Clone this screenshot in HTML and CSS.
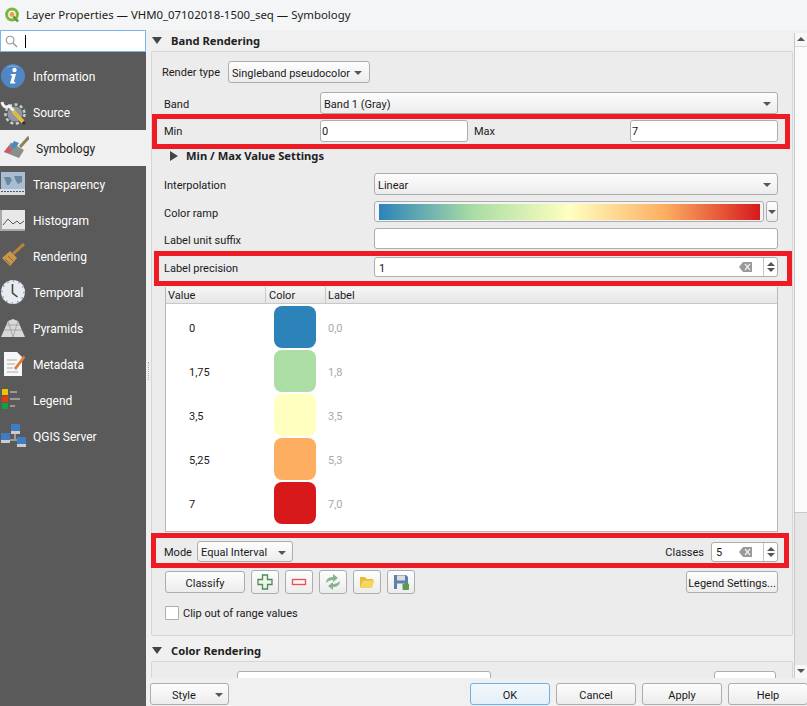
FILE: index.html
```html
<!DOCTYPE html>
<html>

<head>
  <title>Layer Properties</title>
  <link rel="stylesheet" href="styles.css">
</head>

<body>
  <div class="window">
    <div class="titlebar">
      <svg class="appIcon" viewBox="0 0 16 16">
        <circle cx="8" cy="7.5" r="5.4" fill="none" stroke="#7fb53c" stroke-width="3"/>
        <circle cx="8" cy="7.5" r="2.4" fill="#e8a33d"/>
        <path d="M9.5 9.5 14 14.5" stroke="#5f9a2c" stroke-width="2.6"/>
      </svg>
      <span>Layer Properties — VHM0_07102018-1500_seq — Symbology</span>
    </div>
    <div class="body">
      <div class="sidebar">
        <div class="search">
          <svg class="searchIcon" viewBox="0 0 14 14"><circle cx="5.5" cy="5.5" r="4.2" fill="none" stroke="#999" stroke-width="1.2"/><path d="M8.6 8.6 13 13" stroke="#999" stroke-width="1.5"/></svg>
          <span class="caret"></span>
        </div>
        <div class="navItem">
          <svg class="navIcon" viewBox="0 0 26 26"><circle cx="13" cy="13" r="12" fill="#4f86c6"/><path d="M6 5a9 7 0 0 1 14 0a12 8 0 0 0-14 0" fill="#a9c9ec"/><circle cx="14.5" cy="7" r="2.2" fill="#fff"/><path d="M11 11h5l-2.2 8h1.7l-.5 1.5h-5l2.2-8h-1.7z" fill="#fff"/></svg>
          <span>Information</span>
        </div>
        <div class="navItem">
          <svg class="navIcon" viewBox="0 0 26 26"><circle cx="15" cy="15" r="7.5" fill="#8f979f"/><circle cx="15" cy="15" r="9.5" fill="none" stroke="#c9ced3" stroke-width="2.5" stroke-dasharray="3 2.5"/><path d="M2 3c1 5 4 6 7 4l5 5" fill="none" stroke="#f2f2f2" stroke-width="3"/><path d="M13 12l10 11" stroke="#e3b93f" stroke-width="4"/><path d="M23 23l2 2" stroke="#333" stroke-width="3"/></svg>
          <span>Source</span>
        </div>
        <div class="navItem active">
          <svg class="navIcon" viewBox="0 0 26 26"><path d="M1 17 8 8l13 7-5 8z" fill="#8c8c8c"/><path d="M1 17 8 8l4 2-5 8z" fill="#d0576b"/><path d="M8 8l7 3.5-3 3.5-6-3z" fill="#6fae5e"/><path d="M11 6l5 2-4 6-5-2z" fill="#4f86c6"/><path d="M17 12 26 2" stroke="#8a8256" stroke-width="3"/></svg>
          <span>Symbology</span>
        </div>
        <div class="navItem">
          <svg class="navIcon" viewBox="0 0 26 26"><rect x="1" y="1" width="24" height="17" fill="#a9bdd2"/><path d="M4 6h6l2 3-3 5H7zM14 5h8v6l-4 2-2-3z" fill="#6a879f"/><rect x="0" y="18" width="25" height="6" fill="#dcdcdc"/><path d="M1 20.5h23" stroke="#3a5a90" stroke-dasharray="2 1"/></svg>
          <span>Transparency</span>
        </div>
        <div class="navItem">
          <svg class="navIcon" viewBox="0 0 26 26"><rect x="1" y="3" width="24" height="20" fill="#e8e8e8"/><path d="M1 3v20h24" fill="none" stroke="#aaa" stroke-width="2"/><path d="M3 18l5-6 5 5 4-3 3 3 4-3" fill="none" stroke="#556" stroke-width="1"/></svg>
          <span>Histogram</span>
        </div>
        <div class="navItem">
          <svg class="navIcon" viewBox="0 0 26 26"><path d="M2 15 10 8l7 7-7 8z" fill="#c9964b"/><path d="M5 16l5 5M8 13l5 5" stroke="#8f6a2e"/><path d="M13 11 24 1" stroke="#b9833a" stroke-width="3"/></svg>
          <span>Rendering</span>
        </div>
        <div class="navItem">
          <svg class="navIcon" viewBox="0 0 26 26"><circle cx="13" cy="13" r="12" fill="#e8ebf0"/><circle cx="13" cy="13" r="11" fill="none" stroke="#7d9cc4" stroke-width="1.5" stroke-dasharray="1.5 4.2"/><path d="M12.5 5v9l5 4" fill="none" stroke="#444" stroke-width="1.6"/></svg>
          <span>Temporal</span>
        </div>
        <div class="navItem">
          <svg class="navIcon" viewBox="0 0 26 26"><path d="M1 22 8 6 13 4l5 2 7 16z" fill="#d8d8d8"/><path d="M8 6l5 16 5-16M4 15h18M6 10h14" fill="none" stroke="#9a9a9a" stroke-width=".8"/></svg>
          <span>Pyramids</span>
        </div>
        <div class="navItem">
          <svg class="navIcon" viewBox="0 0 26 26"><path d="M4 1h13l5 5v19H4z" fill="#f7f7f7"/><path d="M7 9h10M7 13h8M7 17h6M7 21h11" stroke="#aaa"/><path d="M14 17 24 4l1 3-9 12z" fill="#e07b39"/></svg>
          <span>Metadata</span>
        </div>
        <div class="navItem">
          <svg class="navIcon" viewBox="0 0 26 26"><rect x="2" y="2" width="6" height="6" fill="#f2c200"/><rect x="2" y="9" width="6" height="6" fill="#e03c10"/><rect x="2" y="16" width="6" height="6" fill="#0fa040"/><path d="M10 5h7M10 12h10M10 19h5" stroke="#999" stroke-width="2"/></svg>
          <span>Legend</span>
        </div>
        <div class="navItem">
          <svg class="navIcon" viewBox="0 0 26 26"><path d="M8 17h10M15 8v8M8 17v-2M18 17v3" stroke="#ddd"/><rect x="11" y="1" width="9" height="7" fill="#3f7cc0"/><rect x="11" y="8" width="9" height="3" fill="#ccc"/><rect x="1" y="10" width="9" height="7" fill="#3f7cc0"/><rect x="1" y="17" width="9" height="3" fill="#ccc"/><rect x="17" y="14" width="9" height="7" fill="#3f7cc0"/><rect x="17" y="21" width="9" height="3" fill="#ccc"/></svg>
          <span>QGIS Server</span>
        </div>
        <div class="splitterDots"></div>
      </div>
      <div class="pane">
        <div class="scrollArea">
          <div class="scrollContent">
            <div class="groupTitle"><span class="arrowDown"></span>Band Rendering</div>
            <div class="groupBox">
              <div class="renderRow">
                <label class="renderLabel">Render type</label>
                <div class="combo renderCombo"><span>Singleband pseudocolor</span><i class="comboArrow"></i></div>
              </div>
              <div class="formRow bandRow">
                <label class="colBand">Band</label>
                <div class="combo grow"><span>Band 1 (Gray)</span><i class="comboArrow"></i></div>
              </div>
              <div class="formRow minMaxRow">
                <label class="colBand">Min</label>
                <div class="field minField">0</div>
                <label class="maxLabel">Max</label>
                <div class="field minField">7</div>
              </div>
              <div class="subTitle"><span class="arrowRight"></span>Min / Max Value Settings</div>
              <div class="formRow interpRow">
                <label class="colInterp">Interpolation</label>
                <div class="combo grow"><span>Linear</span><i class="comboArrow"></i></div>
              </div>
              <div class="formRow rampRow">
                <label class="colInterp">Color ramp</label>
                <div class="rampButton grow"><div class="ramp"></div></div>
                <div class="rampMenu"><i class="comboArrow"></i></div>
              </div>
              <div class="formRow suffixRow">
                <label class="colInterp">Label unit suffix</label>
                <div class="field grow"></div>
              </div>
              <div class="formRow precisionRow">
                <label class="colInterp">Label precision</label>
                <div class="spin grow">
                  <span class="spinValue">1</span>
                  <svg class="clearIcon" viewBox="0 0 13 10"><path d="M4 0h9v10H4L0 5z" fill="#999"/><path d="M6 2l5 6M11 2 6 8" stroke="#eee" stroke-width="1.2"/></svg>
                  <div class="spinArrows"><i class="up"></i><i class="down"></i></div>
                </div>
              </div>
              <div class="table">
                <div class="tableHead">
                  <div class="colValue">Value</div>
                  <div class="colColor">Color</div>
                  <div class="colLabel">Label</div>
                </div>
                <div class="tableBody">
                  <div class="tableRow"><div class="cellValue">0</div><div class="swatch swatchBlue"></div><div class="cellLabel">0,0</div></div>
                  <div class="tableRow"><div class="cellValue">1,75</div><div class="swatch swatchGreen"></div><div class="cellLabel">1,8</div></div>
                  <div class="tableRow"><div class="cellValue">3,5</div><div class="swatch swatchYellow"></div><div class="cellLabel">3,5</div></div>
                  <div class="tableRow"><div class="cellValue">5,25</div><div class="swatch swatchOrange"></div><div class="cellLabel">5,3</div></div>
                  <div class="tableRow"><div class="cellValue">7</div><div class="swatch swatchRed"></div><div class="cellLabel">7,0</div></div>
                </div>
              </div>
              <div class="modeRow">
                <label class="modeLabel">Mode</label>
                <div class="combo modeCombo"><span>Equal Interval</span><i class="comboArrow"></i></div>
                <label class="classesLabel">Classes</label>
                <div class="spin classesSpin">
                  <span class="spinValue">5</span>
                  <svg class="clearIcon" viewBox="0 0 13 10"><path d="M4 0h9v10H4L0 5z" fill="#999"/><path d="M6 2l5 6M11 2 6 8" stroke="#eee" stroke-width="1.2"/></svg>
                  <div class="spinArrows"><i class="up"></i><i class="down"></i></div>
                </div>
              </div>
              <div class="actionRow">
                <button class="btn classifyBtn">Classify</button>
                <button class="btn iconBtn"><svg viewBox="0 0 16 16"><path d="M5.5 1h5v4.5h4.5v5h-4.5v4.500h-5v-4.500h-4.500v-5h4.500z" fill="#eef5ea" stroke="#4f8a57" stroke-width="1.3"/></svg></button>
                <button class="btn iconBtn"><svg viewBox="0 0 16 16"><rect x="1.5" y="5.5" width="13" height="5" fill="#fdf0f0" stroke="#e85050" stroke-width="1.3"/></svg></button>
                <button class="btn iconBtn"><svg viewBox="0 0 16 16"><path d="M1 9c0-4 3-6 7-6V0l5 4-5 4V6C5 6 3 7 1 9z" fill="#86b592"/><path d="M15 7c0 4-3 6-7 6v3l-5-4 5-4v2c3 0 5-1 7-3z" fill="#86b592"/></svg></button>
                <button class="btn iconBtn"><svg viewBox="0 0 16 16"><path d="M1 14V3h5l1.5 2H14v2H4L1 14z" fill="#e8b93a"/><path d="M1 14 4 6.5h11.5L13 14z" fill="#f5d75e"/></svg></button>
                <button class="btn iconBtn"><svg viewBox="0 0 16 16"><path d="M1 1h12l2 2v12H1z" fill="#5f80a8"/><rect x="4" y="1.5" width="8" height="5" fill="#d8dde3"/><rect x="4" y="9.5" width="8" height="5.5" fill="#eef0f3"/><rect x="9.5" y="9.5" width="6.5" height="6.5" rx="1" fill="#5c9a50"/></svg></button>
                <button class="btn legendBtn">Legend Settings...</button>
              </div>
              <div class="clipRow"><span class="checkbox"></span><span class="clipText">Clip out of range values</span></div>
            </div>
            <div class="groupTitle colorTitle"><span class="arrowDown"></span>Color Rendering</div>
            <div class="groupBox colorBox">
              <div class="field colorField"></div>
              <div class="field colorReset"></div>
            </div>
          </div>
          <div class="scrollbar">
            <div class="scrollUp"></div>
            <div class="scrollThumb"></div>
            <div class="scrollTrack"></div>
            <div class="scrollDown"></div>
          </div>
        </div>
        <div class="footer">
          <button class="btn styleBtn">Style<i class="comboArrow"></i></button>
          <div class="footerRight">
            <button class="btn footerBtn okBtn">OK</button>
            <button class="btn footerBtn">Cancel</button>
            <button class="btn footerBtn">Apply</button>
            <button class="btn footerBtn">Help</button>
          </div>
        </div>
      </div>
    </div>
    <!-- annotations drawn on top of the screenshot -->
    <div class="redBox redBoxMin"></div>
    <div class="redBox redBoxPrecision"></div>
    <div class="redBox redBoxMode"></div>
  </div>
</body>

</html>
```
FILE: styles.css
```css
* {
  box-sizing: border-box;
}

body {
  margin: 0;
  font-family: Roboto, Arial, sans-serif;
  font-size: 11px;
  color: #1a1a1a;
}

.window {
  position: relative;
  width: 807px;
  height: 706px;
  overflow: hidden;
  background: #f0f0f0;
  display: flex;
  flex-direction: column;
}

.titlebar {
  height: 30px;
  flex: none;
  display: flex;
  align-items: center;
  gap: 6px;
  padding-left: 4px;
  padding-bottom: 1px;
  background: #f3f5f6;
  font-family: "Noto Sans", Arial, sans-serif;
  font-size: 11.4px;
}

.appIcon {
  width: 16px;
  height: 16px;
}

.body {
  flex: 1;
  display: flex;
  min-height: 0;
}

.sidebar {
  position: relative;
  width: 146px;
  flex: none;
  background: #5a5a5a;
}

.search {
  height: 22px;
  background: #fff;
  border: 1px solid #7eb4ea;
  display: flex;
  align-items: center;
  padding-left: 4px;
  gap: 7px;
}

.searchIcon {
  width: 13px;
  height: 13px;
}

.caret {
  width: 1px;
  height: 13px;
  background: #000;
}

.navItem {
  height: 36px;
  display: flex;
  align-items: center;
  gap: 7px;
  color: #fff;
  font-size: 12px;
}

.navItem span {
  padding-top: 2px;
}

.search + .navItem {
  margin-top: 6px;
}

.navItem.active {
  background: #f0f0f0;
  color: #1a1a1a;
  padding-left: 3px;
}

.navIcon {
  width: 26px;
  height: 26px;
  flex: none;
}

.splitterDots {
  position: absolute;
  right: -3px;
  top: 332px;
  width: 1px;
  height: 18px;
  border-left: 1px dotted #aaa;
}

.pane {
  flex: 1;
  min-width: 0;
  display: flex;
  flex-direction: column;
}

.scrollArea {
  flex: 1;
  min-height: 0;
  display: flex;
  overflow: hidden;
}

.scrollContent {
  flex: 1;
  min-width: 0;
  padding-left: 5px;
  padding-right: 1px;
}

.groupTitle {
  height: 21px;
  display: flex;
  align-items: center;
  font-family: "Noto Sans", Arial, sans-serif;
  font-size: 11.2px;
  font-weight: 700;
  color: #222;
  gap: 9px;
  padding-left: 1px;
}

.arrowDown {
  width: 0;
  height: 0;
  border-left: 5.5px solid transparent;
  border-right: 5.5px solid transparent;
  border-top: 7px solid #444;
}

.arrowRight {
  width: 0;
  height: 0;
  border-top: 5.5px solid transparent;
  border-bottom: 5.5px solid transparent;
  border-left: 8px solid #444;
}

.groupBox {
  height: 585px;
  background: #ececec;
  border: 1px solid #d6d6d6;
  border-radius: 2px;
  padding: 9px 14px 0 13px;
}

.colorTitle {
  margin-top: 4px;
}

.colorBox {
  height: 40px;
  display: flex;
  padding-top: 9px;
}

.colorField {
  width: 254px;
  margin-left: 72px;
}

.colorReset {
  width: 62px;
  margin-left: auto;
  margin-right: 2px;
}

label {
  display: block;
  padding-top: 2px;
}

.renderRow {
  display: flex;
  align-items: center;
  gap: 6px;
  margin-left: -3px;
}

.renderLabel {
  width: 60px;
  padding-top: 0;
}

.combo,
.rampButton,
.rampMenu,
.btn {
  border: 1px solid #adadad;
  border-radius: 3px;
  background: linear-gradient(#fdfdfd, #ececec);
}

.combo {
  height: 22px;
  display: flex;
  align-items: center;
  justify-content: space-between;
  padding: 2px 6px 0 3px;
}

.comboArrow {
  display: block;
  width: 0;
  height: 0;
  border-left: 4px solid transparent;
  border-right: 4px solid transparent;
  border-top: 4px solid #555;
}

.renderCombo {
  width: 142px;
  padding-right: 7px;
}

.formRow {
  display: flex;
  align-items: center;
  height: 22px;
}

.grow {
  flex: 1;
  min-width: 0;
}

.bandRow {
  margin-top: 9px;
}

.minMaxRow {
  margin-top: 6px;
}

.minMaxRow label {
  padding-top: 0;
}

.colBand {
  width: 156px;
  margin-left: -1px;
  flex: none;
}

.colInterp {
  width: 210px;
  margin-left: -1px;
  flex: none;
}

.field {
  height: 22px;
  background: #fff;
  border: 1px solid #adadad;
  border-radius: 3px;
  padding: 0 1px;
  line-height: 22px;
}

.minField {
  width: 148px;
}

.maxLabel {
  margin-left: 6px;
  width: 156px;
}

.subTitle {
  height: 21px;
  margin-top: 3px;
  margin-left: 5px;
  display: flex;
  align-items: center;
  gap: 8px;
  font-family: "Noto Sans", Arial, sans-serif;
  font-size: 11.2px;
  font-weight: 700;
  color: #222;
}

.interpRow {
  margin-top: 7px;
}

.rampRow {
  margin-top: 6px;
  height: 21px;
}

.rampRow label,
.precisionRow label {
  padding-top: 3px;
}

.rampButton {
  height: 21px;
  padding: 2px 3px 1px 4px;
  background: #f4f4f4;
}

.ramp {
  height: 16px;
  background: linear-gradient(to right, #2b83ba, #abdda4 25%, #ffffbf 50%, #fdae61 75%, #d7191c);
}

.rampMenu {
  width: 12px;
  height: 21px;
  margin-left: 2px;
  display: flex;
  align-items: center;
  justify-content: center;
}

.suffixRow {
  margin-top: 6px;
  height: 21px;
}

.suffixRow label {
  padding-top: 4px;
}

.suffixRow .field {
  height: 21px;
}

.precisionRow {
  margin-top: 8px;
  height: 20px;
}

.spin {
  height: 20px;
  background: #fff;
  border: 1px solid #adadad;
  border-radius: 3px;
  display: flex;
  align-items: center;
  padding-left: 4px;
}

.spinValue {
  flex: 1;
  padding-top: 2px;
}

.clearIcon {
  width: 13px;
  height: 10px;
  margin-right: 11px;
}

.spinArrows {
  width: 14px;
  height: 100%;
  border-left: 1px solid #c4c4c4;
  display: flex;
  flex-direction: column;
  align-items: center;
  justify-content: center;
  gap: 2px;
}

.spinArrows .up {
  border-left: 4px solid transparent;
  border-right: 4px solid transparent;
  border-bottom: 4px solid #555;
}

.spinArrows .down {
  border-left: 4px solid transparent;
  border-right: 4px solid transparent;
  border-top: 4px solid #555;
}

.table {
  margin-top: 10px;
  border: 1px solid #b8b8b8;
  border-top: 0;
  height: 245px;
  background: #fff;
}

.tableHead {
  height: 17px;
  display: flex;
  background: linear-gradient(#f6f6f6, #e6e6e6);
  border-bottom: 1px solid #c8c8c8;
  line-height: 18px;
  padding-left: 2px;
}

.colValue {
  width: 98px;
  border-right: 1px solid #c8c8c8;
}

.colColor {
  width: 60px;
  padding-left: 3px;
  border-right: 1px solid #c8c8c8;
}

.colLabel {
  padding-left: 2px;
}

.tableBody {
  padding-top: 1px;
}

.tableRow {
  height: 44px;
  display: flex;
  align-items: center;
}

.cellValue {
  width: 108px;
  padding: 2px 0 0 23px;
}

.swatch {
  width: 42px;
  height: 42px;
  border-radius: 8px;
}

.swatchBlue {
  background: #2b83ba;
}

.swatchGreen {
  background: #abdda4;
}

.swatchYellow {
  background: #ffffbf;
}

.swatchOrange {
  background: #fdae61;
}

.swatchRed {
  background: #d7191c;
}

.cellLabel {
  margin-left: 12px;
  padding-top: 2px;
  color: #a8a8a8;
}

.modeRow {
  display: flex;
  align-items: center;
  margin-top: 9px;
  height: 21px;
}

.modeLabel {
  width: 33px;
  margin-left: -1px;
}

.modeCombo {
  width: 96px;
  height: 21px;
}

.classesLabel {
  margin-left: auto;
  margin-right: 7px;
}

.classesSpin {
  width: 67px;
}

.actionRow {
  display: flex;
  align-items: center;
  gap: 6px;
  margin-top: 8px;
  height: 24px;
}

.btn {
  height: 22px;
  padding: 2px 0 0;
  font: inherit;
  color: inherit;
}

.classifyBtn {
  width: 80px;
}

.iconBtn {
  width: 28px;
  height: 24px;
  padding: 0;
  display: flex;
  align-items: center;
  justify-content: center;
}

.iconBtn svg {
  width: 16px;
  height: 16px;
}

.legendBtn {
  width: 92px;
  margin-left: auto;
}

.clipRow {
  display: flex;
  align-items: center;
  gap: 4px;
  margin-top: 11px;
}

.clipText {
  padding-top: 2px;
}

.checkbox {
  width: 14px;
  height: 14px;
  background: #fff;
  border: 1px solid #adadad;
  border-radius: 1px;
}

.scrollbar {
  width: 13px;
  flex: none;
  margin-top: 3px;
  display: flex;
  flex-direction: column;
  background: #f7f7f7;
  border-left: 1px solid #c8c8c8;
}

.scrollUp,
.scrollDown {
  height: 13px;
  position: relative;
}

.scrollThumb {
  height: 467px;
  background: #fafafa;
  border-top: 1px solid #d8d8d8;
  border-bottom: 1px solid #c8c8c8;
}

.scrollTrack {
  flex: 1;
  background: #e6e6e6;
}

.scrollUp::after,
.scrollDown::after {
  content: "";
  position: absolute;
  left: 2px;
  top: 4px;
  border-left: 4px solid transparent;
  border-right: 4px solid transparent;
}

.scrollUp::after {
  border-bottom: 4px solid #555;
}

.scrollDown::after {
  border-top: 4px solid #555;
}

.footer {
  height: 28px;
  flex: none;
  background: #f0f0f0;
  display: flex;
  align-items: center;
  padding: 4px 0 0 4px;
  position: relative;
}

.styleBtn {
  width: 79px;
  display: flex;
  align-items: center;
  justify-content: space-between;
  padding: 2px 5px 0 21px;
}

.footerRight {
  margin-left: auto;
  margin-right: -1px;
  display: flex;
  gap: 6px;
}

.footerBtn {
  width: 80px;
}

.okBtn {
  border-color: #6cb2e8;
  background: linear-gradient(#f2f8fd, #e4eff8);
}

.redBox {
  position: absolute;
  border: 5px solid #ed1c24;
  pointer-events: none;
}

.redBoxMin {
  left: 152px;
  top: 114px;
  width: 638px;
  height: 35px;
}

.redBoxPrecision {
  left: 154px;
  top: 251px;
  width: 638px;
  height: 35px;
}

.redBoxMode {
  left: 151px;
  top: 533px;
  width: 638px;
  height: 35px;
}
```
